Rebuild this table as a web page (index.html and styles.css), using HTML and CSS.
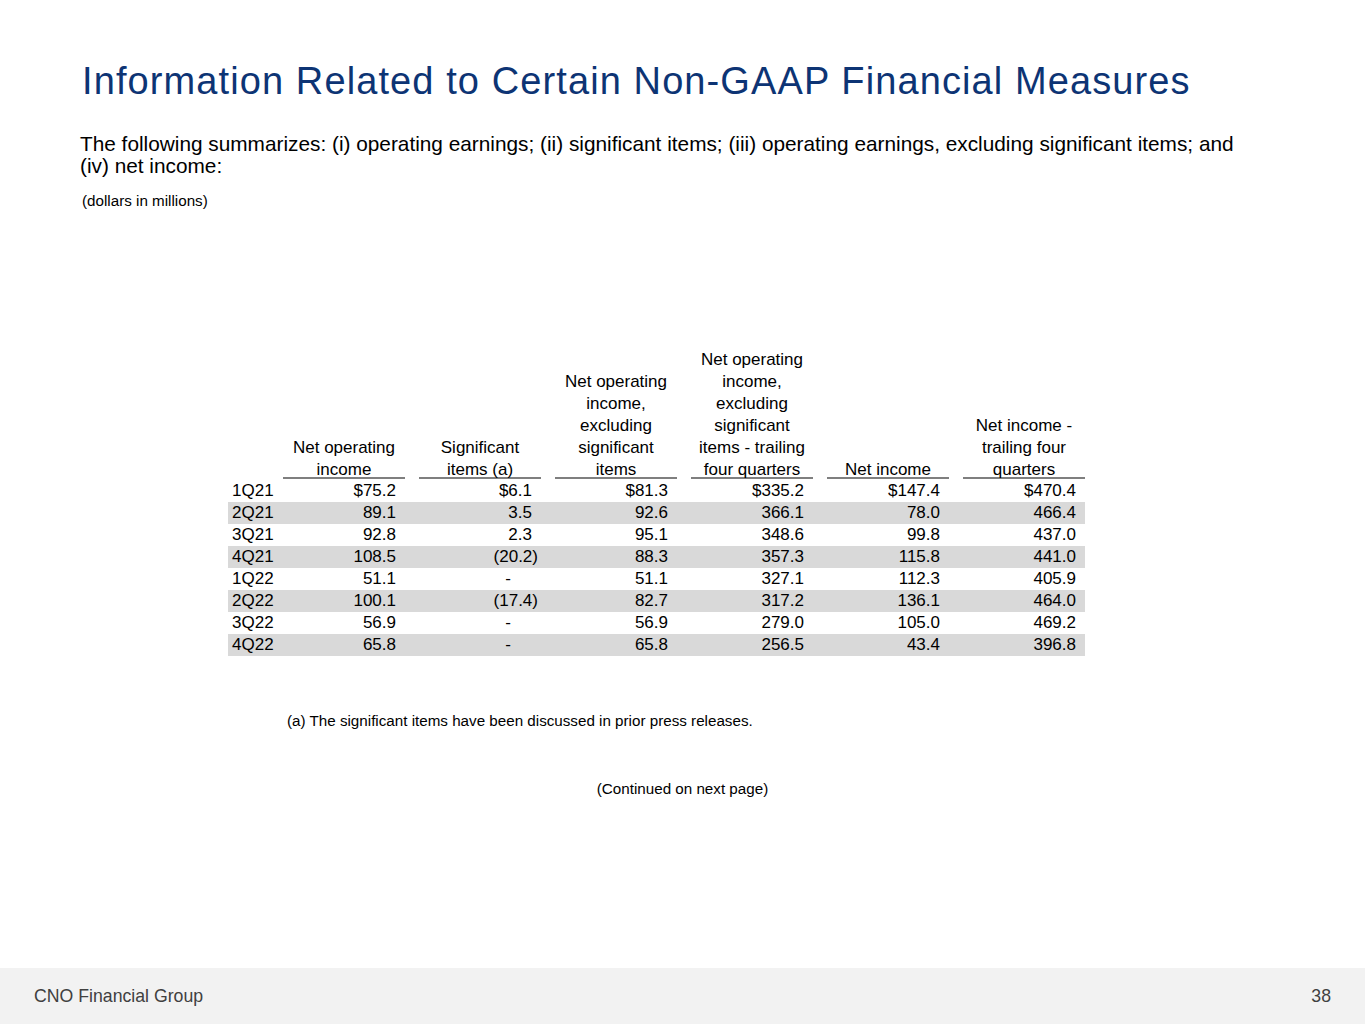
FILE: index.html
```html
<!DOCTYPE html>
<html>
<head>
<meta charset="utf-8">
<link rel="stylesheet" href="styles.css">
</head>
<body>
<div class="slide">
  <main class="content">
    <h1 class="title">Information Related to Certain Non-GAAP Financial Measures</h1>
    <p class="intro">The following summarizes: (i) operating earnings; (ii) significant items; (iii) operating earnings, excluding significant items; and (iv) net income:</p>
    <p class="units">(dollars in millions)</p>

    <div class="table">
      <div class="row head">
        <div class="cell label"></div>
        <div class="cell hcell"><span class="htext">Net operating<br>income</span></div>
        <div class="cell hcell"><span class="htext">Significant<br>items (a)</span></div>
        <div class="cell hcell"><span class="htext">Net operating<br>income,<br>excluding<br>significant<br>items</span></div>
        <div class="cell hcell"><span class="htext">Net operating<br>income,<br>excluding<br>significant<br>items - trailing<br>four quarters</span></div>
        <div class="cell hcell"><span class="htext">Net income</span></div>
        <div class="cell hcell"><span class="htext">Net income -<br>trailing four<br>quarters</span></div>
      </div>
      <div class="row">
        <div class="cell label">1Q21</div><div class="cell num">$75.2</div><div class="cell num">$6.1</div><div class="cell num">$81.3</div><div class="cell num">$335.2</div><div class="cell num">$147.4</div><div class="cell num">$470.4</div>
      </div>
      <div class="row shade">
        <div class="cell label">2Q21</div><div class="cell num">89.1</div><div class="cell num">3.5</div><div class="cell num">92.6</div><div class="cell num">366.1</div><div class="cell num">78.0</div><div class="cell num">466.4</div>
      </div>
      <div class="row">
        <div class="cell label">3Q21</div><div class="cell num">92.8</div><div class="cell num">2.3</div><div class="cell num">95.1</div><div class="cell num">348.6</div><div class="cell num">99.8</div><div class="cell num">437.0</div>
      </div>
      <div class="row shade">
        <div class="cell label">4Q21</div><div class="cell num">108.5</div><div class="cell num">(20.2<span class="paren">)</span></div><div class="cell num">88.3</div><div class="cell num">357.3</div><div class="cell num">115.8</div><div class="cell num">441.0</div>
      </div>
      <div class="row">
        <div class="cell label">1Q22</div><div class="cell num">51.1</div><div class="cell num"><span class="dash">-</span></div><div class="cell num">51.1</div><div class="cell num">327.1</div><div class="cell num">112.3</div><div class="cell num">405.9</div>
      </div>
      <div class="row shade">
        <div class="cell label">2Q22</div><div class="cell num">100.1</div><div class="cell num">(17.4<span class="paren">)</span></div><div class="cell num">82.7</div><div class="cell num">317.2</div><div class="cell num">136.1</div><div class="cell num">464.0</div>
      </div>
      <div class="row">
        <div class="cell label">3Q22</div><div class="cell num">56.9</div><div class="cell num"><span class="dash">-</span></div><div class="cell num">56.9</div><div class="cell num">279.0</div><div class="cell num">105.0</div><div class="cell num">469.2</div>
      </div>
      <div class="row shade">
        <div class="cell label">4Q22</div><div class="cell num">65.8</div><div class="cell num"><span class="dash">-</span></div><div class="cell num">65.8</div><div class="cell num">256.5</div><div class="cell num">43.4</div><div class="cell num">396.8</div>
      </div>
    </div>

    <p class="footnote">(a) The significant items have been discussed in prior press releases.</p>
    <p class="continued">(Continued on next page)</p>
  </main>
  <footer class="footer">
    <span class="company">CNO Financial Group</span>
    <span class="page">38</span>
  </footer>
</div>
</body>
</html>
```
FILE: styles.css
```css
html, body {
  margin: 0;
  padding: 0;
  background: #ffffff;
}
body {
  font-family: "Liberation Sans", Arial, sans-serif;
  color: #000000;
}
.slide {
  width: 1365px;
  height: 1024px;
  display: flex;
  flex-direction: column;
}
.content {
  flex: 1;
  display: flex;
  flex-direction: column;
}
.title {
  margin: 58px 0 0 82px;
  font-size: 38px;
  font-weight: normal;
  line-height: 46px;
  color: #0d3474;
  letter-spacing: 1.1px;
}
.intro {
  margin: 29px 0 0 80px;
  width: 1170px;
  font-size: 20.8px;
  line-height: 22px;
}
.units {
  margin: 15px 0 0 82px;
  font-size: 15.2px;
  line-height: 18px;
}
.table {
  margin: 139px 0 0 228px;
  display: flex;
  flex-direction: column;
  width: 857px;
  font-size: 17px;
}
.row {
  display: grid;
  grid-template-columns: 41px repeat(6, 122px);
  column-gap: 14px;
  height: 22px;
  line-height: 22px;
}
.row.head {
  height: auto;
  align-items: end;
}
.shade {
  background: #d9d9d9;
}
.label {
  padding-left: 4px;
  white-space: nowrap;
}
.hcell {
  text-align: center;
  border-bottom: 2px solid #7f7f7f;
  line-height: 22px;
  margin-bottom: 1px;
}
.htext {
  display: block;
  margin-bottom: -4px;
}
.num {
  text-align: right;
  padding-right: 9px;
}
.paren {
  margin-right: -6px;
}
.dash {
  display: inline-block;
  margin-right: 21px;
}
.footnote {
  margin: 56px 0 0 287px;
  font-size: 15.2px;
  line-height: 18px;
}
.continued {
  margin: 50px 0 0 0;
  text-align: center;
  font-size: 15.2px;
  line-height: 18px;
}
.footer {
  height: 56px;
  background: #f2f2f2;
  display: flex;
  align-items: center;
  justify-content: space-between;
  padding: 0 34px;
  font-size: 17.7px;
  color: #404040;
}
```
